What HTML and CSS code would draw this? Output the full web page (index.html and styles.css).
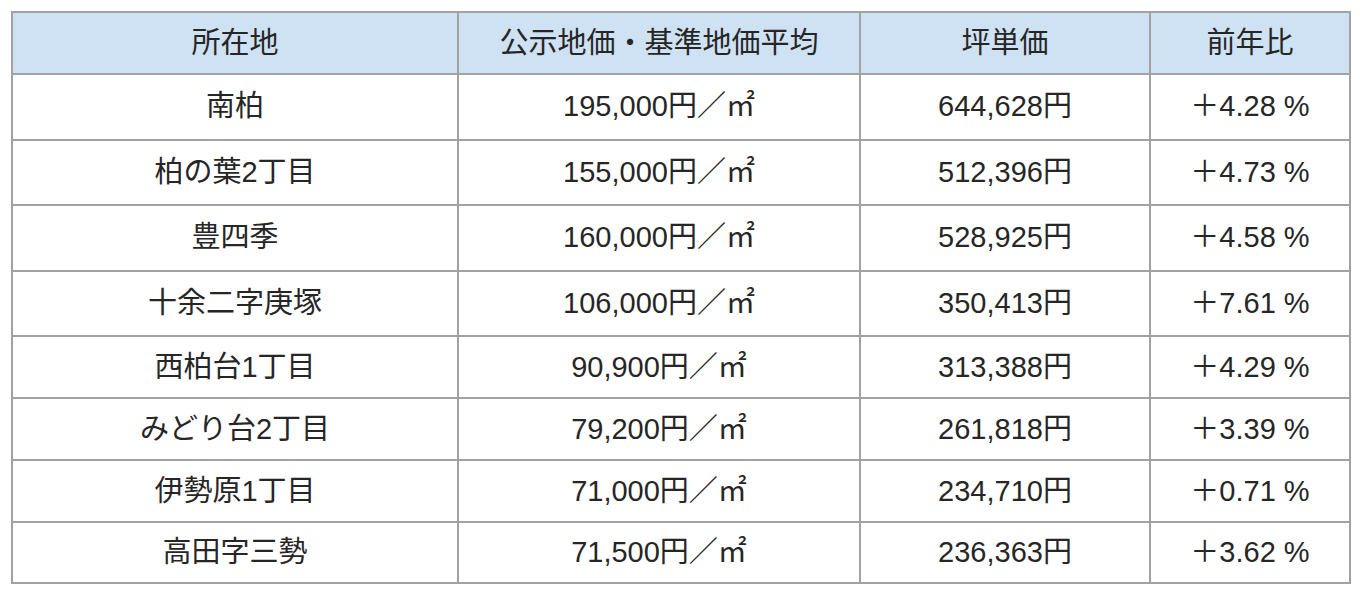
FILE: index.html
```html
<!DOCTYPE html>
<html lang="ja">
<head>
<meta charset="utf-8">
<title>柏市 地価</title>
<link rel="stylesheet" href="styles.css">
</head>
<body>
<table class="price-table">
  <colgroup>
    <col class="c1"><col class="c2"><col class="c3"><col class="c4">
  </colgroup>
  <thead>
    <tr class="head-row">
      <th>所在地</th><th>公示地価・基準地価平均</th><th>坪単価</th><th>前年比</th>
    </tr>
  </thead>
  <tbody>
    <tr class="tall"><td>南柏</td><td>195,000円／㎡</td><td>644,628円</td><td>＋4.28 %</td></tr>
    <tr class="tall"><td>柏の葉2丁目</td><td>155,000円／㎡</td><td>512,396円</td><td>＋4.73 %</td></tr>
    <tr class="tall"><td>豊四季</td><td>160,000円／㎡</td><td>528,925円</td><td>＋4.58 %</td></tr>
    <tr class="tall"><td>十余二字庚塚</td><td>106,000円／㎡</td><td>350,413円</td><td>＋7.61 %</td></tr>
    <tr class="short"><td>西柏台1丁目</td><td>90,900円／㎡</td><td>313,388円</td><td>＋4.29 %</td></tr>
    <tr class="short"><td>みどり台2丁目</td><td>79,200円／㎡</td><td>261,818円</td><td>＋3.39 %</td></tr>
    <tr class="short"><td>伊勢原1丁目</td><td>71,000円／㎡</td><td>234,710円</td><td>＋0.71 %</td></tr>
    <tr class="last"><td>高田字三勢</td><td>71,500円／㎡</td><td>236,363円</td><td>＋3.62 %</td></tr>
  </tbody>
</table>
</body>
</html>
```

FILE: styles.css
```css
html, body {
  margin: 0;
  padding: 0;
  background: #ffffff;
}

body {
  padding: 11px 0 0 11px;
  font-family: "Liberation Sans", "Noto Sans CJK JP", sans-serif;
  color: #262626;
}

.price-table {
  border-collapse: collapse;
  table-layout: fixed;
  width: 1340px;
  font-size: 29px;
  line-height: 1.2;
}

.c1 { width: 446px; }
.c2 { width: 402px; }
.c3 { width: 290px; }
.c4 { width: 200px; }

.price-table th,
.price-table td {
  border: 2px solid #a2a2a2;
  padding: 0;
  text-align: center;
  vertical-align: middle;
  font-weight: 400;
  white-space: nowrap;
}

.price-table th {
  background: #cfe2f3;
}

.head-row { height: 62px; }
.tall { height: 65.5px; }
.short { height: 62px; }
.last { height: 61px; }
```
